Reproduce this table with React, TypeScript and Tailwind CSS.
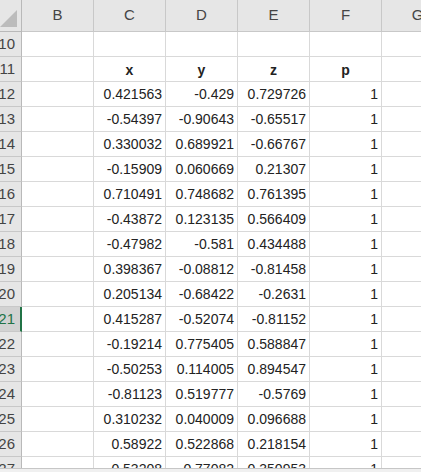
import React from "react";

const rows: (string | number)[][] = [
  [10, "", "", "", ""],
  [11, "x", "y", "z", "p"],
  [12, "0.421563", "-0.429", "0.729726", "1"],
  [13, "-0.54397", "-0.90643", "-0.65517", "1"],
  [14, "0.330032", "0.689921", "-0.66767", "1"],
  [15, "-0.15909", "0.060669", "0.21307", "1"],
  [16, "0.710491", "0.748682", "0.761395", "1"],
  [17, "-0.43872", "0.123135", "0.566409", "1"],
  [18, "-0.47982", "-0.581", "0.434488", "1"],
  [19, "0.398367", "-0.08812", "-0.81458", "1"],
  [20, "0.205134", "-0.68422", "-0.2631", "1"],
  [21, "0.415287", "-0.52074", "-0.81152", "1"],
  [22, "-0.19214", "0.775405", "0.588847", "1"],
  [23, "-0.50253", "0.114005", "0.894547", "1"],
  [24, "-0.81123", "0.519777", "-0.5769", "1"],
  [25, "0.310232", "0.040009", "0.096688", "1"],
  [26, "0.58922", "0.522868", "0.218154", "1"],
  [27, "0.53208", "0.77082", "0.350953", "1"],
];

const cols = ["B", "C", "D", "E", "F", "G"];

const App: React.FC = () => {
  return (
    <div
      className="flex h-[472px] w-[421px] flex-col overflow-hidden bg-white text-[#222]"
      style={{ fontFamily: '"Liberation Sans", "Noto Sans CJK JP", sans-serif' }}
    >
      <div className="flex-1 overflow-hidden">
        {/* Column headers */}
        <div className="flex h-[32px]">
          <div className="relative w-[22px] shrink-0 border-b border-r border-[#b9b9b9] bg-[#e6e6e6]">
            <svg className="absolute bottom-[4px] right-[4px]" width="17" height="17" viewBox="0 0 17 17">
              <polygon points="17,0 17,17 0,17" fill="#bcbcbc" />
            </svg>
          </div>
          {cols.map((c) => (
            <div
              key={c}
              className="flex w-[72px] shrink-0 items-center justify-center border-b border-r border-[#c8c8c8] bg-[#e6e6e6] text-[15px] text-[#444]"
            >
              {c}
            </div>
          ))}
        </div>
        {/* Rows */}
        {rows.map((r) => {
          const selected = r[0] === 21;
          return (
            <div key={r[0]} className="flex h-[25px]">
              <div
                className={
                  selected
                    ? "flex w-[22px] shrink-0 items-center justify-end overflow-hidden border-b border-r-2 border-b-[#c8c8c8] border-r-[#217346] bg-[#d2d2d2] pr-[5px] text-[15px] text-[#217346]"
                    : "flex w-[22px] shrink-0 items-center justify-end overflow-hidden border-b border-r border-b-[#c8c8c8] border-r-[#b9b9b9] bg-[#e6e6e6] pr-[6px] text-[15px] text-[#444]"
                }
              >
                <span className="whitespace-nowrap">{r[0]}</span>
              </div>
              <div className="w-[72px] shrink-0 border-b border-r border-[#d9d9d9]" />
              {r.slice(1).map((v, i) => (
                <div
                  key={i}
                  className={
                    r[0] === 11
                      ? "flex w-[72px] shrink-0 items-center justify-center border-b border-r border-[#d9d9d9] pt-[2px] text-[14px] font-bold"
                      : "flex w-[72px] shrink-0 items-center justify-end border-b border-r border-[#d9d9d9] pr-[3px] pt-[1px] text-[14px]"
                  }
                >
                  {v}
                </div>
              ))}
              <div className="w-[72px] shrink-0 border-b border-r border-[#d9d9d9]" />
            </div>
          );
        })}
      </div>
      <div className="h-[4px] shrink-0 border-t border-[#c6c6c6] bg-[#f0f0f0]" />
    </div>
  );
};

export default App;
